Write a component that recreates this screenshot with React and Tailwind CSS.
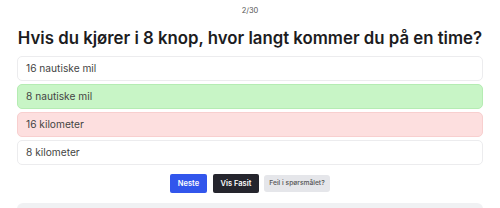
import React from "react";

const options = [
  { text: "16 nautiske mil", tone: "plain" },
  { text: "8 nautiske mil", tone: "right" },
  { text: "16 kilometer", tone: "wrong" },
  { text: "8 kilometer", tone: "plain" },
];

const toneClass = {
  plain: "bg-white border-[#ececee]",
  right: "bg-[#c8f5c6] border-[#b5ecb3]",
  wrong: "bg-[#fddfdf] border-[#f8cfcf]",
};

export default function App() {
  return (
    <div className="w-[500px] h-[208px] overflow-hidden bg-white font-['Inter',sans-serif] text-[#1c1c1e]">
      <div className="pt-[6px] text-center text-[7.5px] leading-[10px] text-[#555]">2/30</div>
      <h1 className="mt-[10px] text-center text-[16.8px] leading-[24px] font-semibold whitespace-nowrap">
        Hvis du kjører i 8 knop, hvor langt kommer du på en time?
      </h1>

      <div className="mx-[17px] mt-[6px] flex flex-col gap-[3px]">
        {options.map((o) => (
          <div
            key={o.text}
            className={`h-[25px] rounded-[5px] border px-[8px] flex items-center text-[10.2px] text-[#444] ${toneClass[o.tone]}`}
          >
            {o.text}
          </div>
        ))}
      </div>

      <div className="mt-[9px] flex justify-center items-center">
        <button className="h-[19px] px-[8px] rounded-[2px] bg-[#3256ec] text-white text-[7.5px] font-semibold">
          Neste
        </button>
        <button className="ml-[6px] h-[19px] px-[7.5px] rounded-[2px] bg-[#25252d] text-white text-[7.5px] font-semibold">
          Vis Fasit
        </button>
        <button className="ml-[5px] h-[17px] px-[5.5px] rounded-[3px] bg-[#e5e6ea] text-[#555] text-[6.7px] font-medium">
          Feil i spørsmålet?
        </button>
      </div>

      <div className="mx-[17px] mt-[10px] h-[20px] rounded-t-[6px] bg-[#f0f1f3]" />
    </div>
  );
}
